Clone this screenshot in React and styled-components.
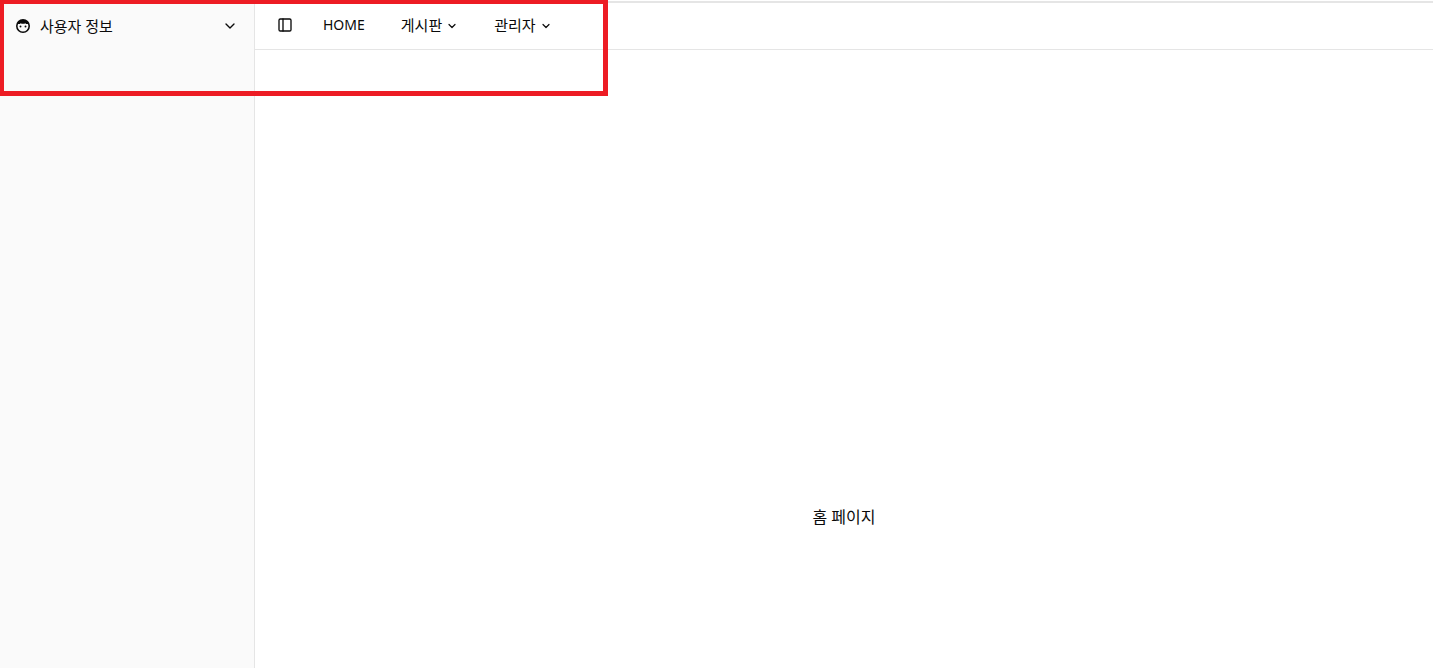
import React from "react";
import styled, { createGlobalStyle } from "styled-components";
import { ChevronDown, PanelLeft } from "lucide-react";

const GlobalStyle = createGlobalStyle`
  *, *::before, *::after { box-sizing: border-box; }
  body {
    margin: 0;
    background: #ffffff;
    color: #0a0a0a;
    font-family: "Noto Sans", "Noto Sans CJK KR", sans-serif;
    font-size: 14px;
    line-height: 20px;
  }
  button { font: inherit; color: inherit; background: none; border: 0; cursor: pointer; }
`;

const Page = styled.div`
  position: relative;
  min-height: 100vh;
  display: flex;
  padding-top: 1px;
`;

const Sidebar = styled.aside`
  flex: 0 0 255px;
  padding: 7px 8px;
  border-top: 2px solid #e5e5e5;
  border-right: 1px solid #e5e5e5;
  background: #fafafa;
`;

const UserButton = styled.button`
  display: flex;
  align-items: center;
  gap: 10px;
  width: 100%;
  height: 32px;
  padding: 0 8px;
  text-align: left;
`;

const UserLabel = styled.span`
  flex: 1;
  font-size: 15px;
`;

const Content = styled.div`
  flex: 1;
  min-width: 0;
  display: flex;
  flex-direction: column;
  border-top: 2px solid #e5e5e5;
`;

const Header = styled.header`
  display: flex;
  align-items: center;
  gap: 8px;
  height: 47px;
  padding: 0 16px 2px;
  border-bottom: 1px solid #e5e5e5;
`;

const IconButton = styled.button`
  display: flex;
  align-items: center;
  justify-content: center;
  width: 28px;
  height: 28px;
  padding: 0;
`;

const Nav = styled.nav`
  display: flex;
  align-items: center;
  gap: 4px;
`;

const NavLink = styled.a`
  padding: 8px 16px;
  color: inherit;
  text-decoration: none;
`;

const NavButton = styled.button`
  display: flex;
  align-items: center;
  gap: 4px;
  padding: 8px 16px;
  font-size: 15px;
`;

const MenuChevron = styled(ChevronDown)`
  margin-top: 2px;
`;

const Main = styled.main`
  padding: 455px 16px 16px;
  font-size: 16px;
  line-height: 24px;
  text-align: center;
`;

const Highlight = styled.div`
  position: absolute;
  top: 0;
  left: 0;
  width: 608px;
  height: 96px;
  border: solid #ed1c24;
  border-width: 4px 5px 5px 4px;
  pointer-events: none;
`;

const menus = ["게시판", "관리자"];

function FaceIcon() {
  return (
    <svg width="14" height="14" viewBox="0 0 14 14" fill="currentColor" aria-hidden="true">
      <path
        fillRule="evenodd"
        d="M7 0a7 7 0 1 1 0 14A7 7 0 0 1 7 0ZM1.600 7.200a5.400 5.400 0 0 0 10.800 0c0-.8-.2-1.500-.5-2.200-1 .2-2-.1-2.700-.8-.7.700-3.700.700-4.400 0-.7.700-1.700 1-2.700.800-.3.700-.5 1.400-.5 2.200Z"
      />
      <circle cx="4.500" cy="7.500" r=".95" />
      <circle cx="9.500" cy="7.500" r=".95" />
    </svg>
  );
}

export default function App() {
  return (
    <Page>
      <GlobalStyle />
      <Sidebar>
        <UserButton type="button">
          <FaceIcon />
          <UserLabel>사용자 정보</UserLabel>
          <ChevronDown size={16} aria-hidden="true" />
        </UserButton>
      </Sidebar>
      <Content>
        <Header>
          <IconButton type="button" aria-label="Toggle Sidebar">
            <PanelLeft size={16} aria-hidden="true" />
          </IconButton>
          <Nav>
            <NavLink href="#home">HOME</NavLink>
            {menus.map((name) => (
              <NavButton type="button" key={name}>
                {name}
                <MenuChevron size={12} strokeWidth={2.4} aria-hidden="true" />
              </NavButton>
            ))}
          </Nav>
        </Header>
        <Main>홈 페이지</Main>
      </Content>
      <Highlight />
    </Page>
  );
}
